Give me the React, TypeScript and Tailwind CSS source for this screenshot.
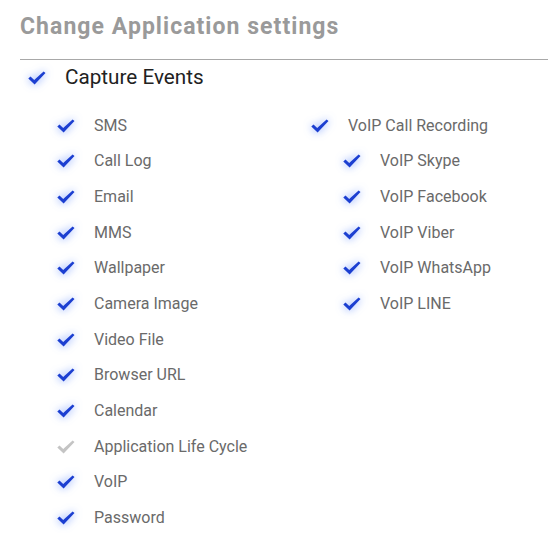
import React from "react";

function Check({ on = true }: { on?: boolean }) {
  return (
    <svg
      width="20"
      height="16"
      viewBox="0 0 20 16"
      className={on ? "drop-shadow-[0_0_4px_rgba(70,120,255,0.8)]" : ""}
    >
      <polygon
        points="1.3,8.6 3.5,6.6 7.2,10.1 16.6,1.4 18.5,3.1 7.6,14.4"
        fill={on ? "#1c3fd1" : "#c4c4c4"}
      />
    </svg>
  );
}

function Item({ label, on = true }: { label: string; on?: boolean }) {
  return (
    <div className="flex h-[35.66px] items-center">
      <div className="flex w-[20px] justify-center">
        <Check on={on} />
      </div>
      <span className="ml-[18px] text-[16px] text-[#6a6a6a]">{label}</span>
    </div>
  );
}

export default function App() {
  const left = [
    "SMS",
    "Call Log",
    "Email",
    "MMS",
    "Wallpaper",
    "Camera Image",
    "Video File",
    "Browser URL",
    "Calendar",
    "Application Life Cycle",
    "VoIP",
    "Password",
  ];
  const sub = ["VoIP Skype", "VoIP Facebook", "VoIP Viber", "VoIP WhatsApp", "VoIP LINE"];
  return (
    <div
      className="w-[548px] h-[544px] bg-white pl-[20px] pt-[12px]"
      style={{ fontFamily: "Roboto, 'Noto Sans', sans-serif" }}
    >
      <h1 className="text-[23px] font-bold leading-[30px] tracking-[1.05px] text-[#9a9a9a]">
        Change Application settings
      </h1>
      <div className="mt-[17px] h-px bg-[#a8a8a8]" />
      <div className="flex h-[35px] items-center pl-[7px]">
        <div className="flex w-[20px] justify-center">
          <Check />
        </div>
        <span className="ml-[18px] text-[20.7px] text-[#222]">Capture Events</span>
      </div>
      <div className="mt-[13px] flex pl-[36px]">
        <div className="w-[254px]">
          {left.map((l) => (
            <Item key={l} label={l} on={l !== "Application Life Cycle"} />
          ))}
        </div>
        <div>
          <Item label="VoIP Call Recording" />
          <div className="pl-[32px]">
            {sub.map((s) => (
              <Item key={s} label={s} />
            ))}
          </div>
        </div>
      </div>
    </div>
  );
}
